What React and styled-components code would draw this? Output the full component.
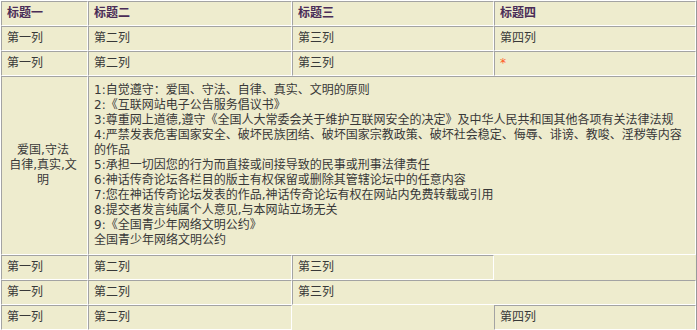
import React from 'react';
import styled, { createGlobalStyle } from 'styled-components';

const GlobalStyle = createGlobalStyle`
  html, body {
    margin: 0;
    padding: 0;
    background: #ffffff;
  }
  body {
    font-family: 'DejaVu Sans', 'Noto Sans CJK SC', sans-serif;
    font-size: 12px;
  }
`;

const rules = [
  '1:自觉遵守：爱国、守法、自律、真实、文明的原则',
  '2:《互联网站电子公告服务倡议书》',
  '3:尊重网上道德,遵守《全国人大常委会关于维护互联网安全的决定》及中华人民共和国其他各项有关法律法规',
  '4:严禁发表危害国家安全、破坏民族团结、破坏国家宗教政策、破坏社会稳定、侮辱、诽谤、教唆、淫秽等内容的作品',
  '5:承担一切因您的行为而直接或间接导致的民事或刑事法律责任',
  '6:神话传奇论坛各栏目的版主有权保留或删除其管辖论坛中的任意内容',
  '7:您在神话传奇论坛发表的作品,神话传奇论坛有权在网站内免费转载或引用',
  '8:提交者发言纯属个人意见,与本网站立场无关',
  '9:《全国青少年网络文明公约》',
  '全国青少年网络文明公约',
];

const App = () => {
  return (
    <>
      <GlobalStyle />
      <Table>
        <colgroup>
          <col style={{ width: '87px' }} />
          <col style={{ width: '204px' }} />
          <col style={{ width: '202px' }} />
          <col />
        </colgroup>
        <thead>
          <tr>
            <HeadCell>标题一</HeadCell>
            <HeadCell>标题二</HeadCell>
            <HeadCell>标题三</HeadCell>
            <HeadCell>标题四</HeadCell>
          </tr>
        </thead>
        <tbody>
          <tr>
            <Cell>第一列</Cell>
            <Cell>第二列</Cell>
            <Cell>第三列</Cell>
            <Cell>第四列</Cell>
          </tr>
          <tr>
            <Cell>第一列</Cell>
            <Cell>第二列</Cell>
            <Cell>第三列</Cell>
            <Cell>
              <Required>*</Required>
            </Cell>
          </tr>
          <tr>
            <Cell $center $tall>
              爱国,守法<br />
              自律,真实,文明
            </Cell>
            <Cell colSpan={3} $tall>
              {rules.map((line) => (
                <RuleLine key={line}>{line}</RuleLine>
              ))}
            </Cell>
          </tr>
          <tr>
            <Cell>第一列</Cell>
            <Cell>第二列</Cell>
            <Cell>第三列</Cell>
            <Cell />
          </tr>
          <tr>
            <Cell>第一列</Cell>
            <Cell>第二列</Cell>
            <Cell colSpan={2}>第三列</Cell>
          </tr>
          <tr>
            <Cell>第一列</Cell>
            <Cell>第二列</Cell>
            <Cell />
            <Cell>第四列</Cell>
          </tr>
        </tbody>
      </Table>
    </>
  );
};

// --- STYLED COMPONENTS ---
const Table = styled.table`
  width: 697px;
  table-layout: fixed;
  border-collapse: separate;
  border-spacing: 0;
  empty-cells: hide;
  background: #eeecce;
  border-top: 1px solid #ffffff;
  border-left: 1px solid #ffffff;
  border-right: 1px solid #999999;
  border-bottom: 1px solid #999999;
`;

const cellBorders = `
  border-top: 1px solid #a3a3a3;
  border-left: 1px solid #a3a3a3;
  border-right: 1px solid #ffffff;
  border-bottom: 1px solid #ffffff;
`;

const HeadCell = styled.th`
  ${cellBorders}
  padding: 4px 5px;
  line-height: 15px;
  text-align: left;
  font-weight: bold;
  color: #4a2c57;
`;

const Cell = styled.td`
  ${cellBorders}
  padding: ${(p) => (p.$tall ? '6px 8px 6px 5px' : '4px 5px')};
  line-height: 15px;
  color: #383838;
  text-align: ${(p) => (p.$center ? 'center' : 'left')};
  vertical-align: middle;
  word-break: break-all;
`;

const RuleLine = styled.div`
  line-height: 15px;
`;

const Required = styled.span`
  color: #ff5a1f;
`;

export default App;
